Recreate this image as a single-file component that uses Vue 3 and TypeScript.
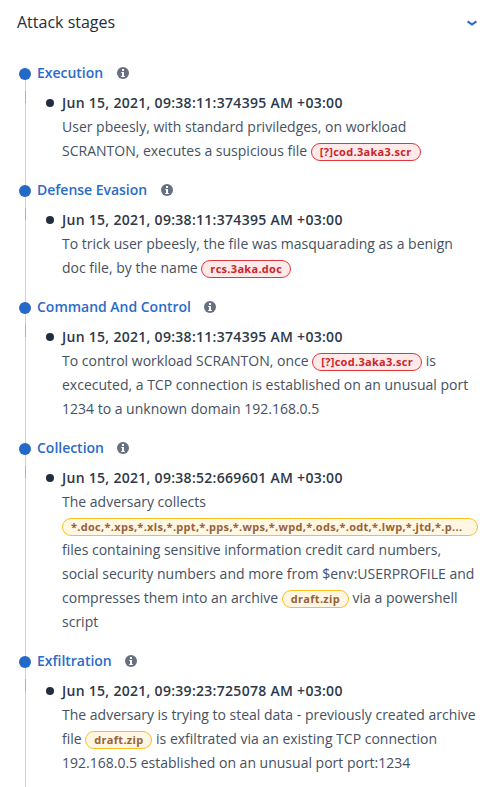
<script setup lang="ts">
type Tone = 'danger' | 'warning'
interface Part {
  text: string
  tone?: Tone
  wide?: boolean
}
interface Stage {
  name: string
  time: string
  lines: Part[][]
}

const t = (text: string): Part => ({ text })
const tag = (text: string, tone: Tone, wide = false): Part => ({ text, tone, wide })

const stages: Stage[] = [
  {
    name: 'Execution',
    time: 'Jun 15, 2021, 09:38:11:374395 AM +03:00',
    lines: [
      [t('User pbeesly, with standard priviledges, on workload')],
      [t('SCRANTON, executes a suspicious file '), tag('[?]cod.3aka3.scr', 'danger')],
    ],
  },
  {
    name: 'Defense Evasion',
    time: 'Jun 15, 2021, 09:38:11:374395 AM +03:00',
    lines: [
      [t('To trick user pbeesly, the file was masquarading as a benign')],
      [t('doc file, by the name '), tag('rcs.3aka.doc', 'danger')],
    ],
  },
  {
    name: 'Command And Control',
    time: 'Jun 15, 2021, 09:38:11:374395 AM +03:00',
    lines: [
      [t('To control workload SCRANTON, once '), tag('[?]cod.3aka3.scr', 'danger'), t(' is')],
      [t('excecuted, a TCP connection is established on an unusual port')],
      [t('1234 to a unknown domain 192.168.0.5')],
    ],
  },
  {
    name: 'Collection',
    time: 'Jun 15, 2021, 09:38:52:669601 AM +03:00',
    lines: [
      [t('The adversary collects')],
      [tag('*.doc,*.xps,*.xls,*.ppt,*.pps,*.wps,*.wpd,*.ods,*.odt,*.lwp,*.jtd,*.p...', 'warning', true)],
      [t('files containing sensitive information credit card numbers,')],
      [t('social security numbers and more from $env:USERPROFILE and')],
      [t('compresses them into an archive '), tag('draft.zip', 'warning'), t(' via a powershell')],
      [t('script')],
    ],
  },
  {
    name: 'Exfiltration',
    time: 'Jun 15, 2021, 09:39:23:725078 AM +03:00',
    lines: [
      [t('The adversary is trying to steal data - previously created archive')],
      [t('file '), tag('draft.zip', 'warning'), t(' is exfiltrated via an existing TCP connection')],
      [t('192.168.0.5 established on an unusual port port:1234')],
    ],
  },
]
</script>

<template>
  <section class="panel">
    <header class="panel-header">
      <h2 class="title">Attack stages</h2>
      <svg class="chevron" viewBox="0 0 12 8" width="12" height="8">
        <path d="M1.6 2.4 L6 5.6 L10.4 2.4" />
      </svg>
    </header>
    <ol class="stages">
      <li v-for="stage in stages" :key="stage.name" class="stage">
        <div class="rail"><span class="dot"></span></div>
        <div class="content">
          <div class="heading">
            <span class="name">{{ stage.name }}</span>
            <svg class="info" viewBox="0 0 12 12" width="12" height="12">
              <circle cx="6" cy="6" r="6" />
              <path d="M5 2h2v2H5zM4.3 5H7v4h.8v1H4.2V9H5V6h-.7z" />
            </svg>
          </div>
          <div class="event">
            <span class="bullet"></span>
            <div class="details">
              <div class="time">{{ stage.time }}</div>
              <div v-for="(line, i) in stage.lines" :key="i" class="line">
                <span
                  v-for="(part, j) in line"
                  :key="j"
                  :class="part.tone ? ['tag', part.tone, { wide: part.wide }] : 'text'"
                >{{ part.text }}</span>
              </div>
            </div>
          </div>
        </div>
      </li>
    </ol>
  </section>
</template>

<style>
body {
  margin: 0;
  background: #fff;
  overflow: hidden;
}
</style>

<style scoped>
.panel {
  box-sizing: border-box;
  width: 495px;
  height: 787px;
  overflow: hidden;
  padding: 10px 17px 0;
  background: #fff;
  font-family: "Open Sans", "Noto Sans", sans-serif;
  font-size: 14px;
  line-height: 24px;
  color: #465162;
}
.panel-header {
  display: flex;
  align-items: center;
  justify-content: space-between;
  height: 24px;
}
.title {
  margin: 0;
  font-size: 16px;
  font-weight: 400;
  color: #222d3e;
}
.chevron {
  margin-top: 1px;
  fill: none;
  stroke: #2368c9;
  stroke-width: 2;
}
.stages {
  list-style: none;
  margin: 27px 0 0;
  padding: 0;
}
.stage {
  display: flex;
}
.rail {
  width: 12px;
  margin: 0 6px 0 2px;
  padding-top: 7px;
  background:
    linear-gradient(#94b5e5, #94b5e5) 6px 30px / 1px 12px no-repeat,
    linear-gradient(#c0d5f0, #c0d5f0) 6px 0 / 1px 100% no-repeat;
}
.stage:first-child .rail {
  background:
    linear-gradient(#94b5e5, #94b5e5) 6px 30px / 1px 12px no-repeat,
    linear-gradient(#c0d5f0, #c0d5f0) 6px 12px / 1px 200px no-repeat;
}
.dot {
  display: block;
  width: 12px;
  height: 12px;
  border-radius: 50%;
  background: #2468c8;
}
.content {
  padding-bottom: 15px;
}
.stage:last-child .content {
  padding-bottom: 40px;
}
.heading {
  display: flex;
  align-items: center;
  gap: 13.4px;
  height: 24px;
  margin-bottom: 6px;
}
.name {
  font-weight: 600;
  letter-spacing: -0.02px;
  color: #2a6bca;
}
.info {
  fill: #667080;
}
.info path {
  fill: #fff;
}
.event {
  display: flex;
}
.bullet {
  width: 8px;
  height: 8px;
  margin: 8px 8px 0 9px;
  border-radius: 50%;
  background: #202e40;
}
.details {
  width: 416px;
}
.time {
  font-weight: 600;
  letter-spacing: 0.29px;
  color: #2d3848;
}
.line {
  display: flex;
  align-items: center;
  height: 24px;
  white-space: pre;
}
.tag {
  box-sizing: border-box;
  height: 18px;
  margin-top: 2px;
  padding: 0 8px;
  border: 1px solid;
  border-radius: 9px;
  font-size: 11px;
  font-weight: 700;
  letter-spacing: 0.3px;
  line-height: 16px;
}
.wide {
  width: 416px;
}
.danger {
  border-color: #e2373c;
  background: #ffe9e9;
  color: #c9252c;
}
.warning {
  border-color: #fbc01d;
  background: #fff7e3;
  color: #966238;
}
</style>
